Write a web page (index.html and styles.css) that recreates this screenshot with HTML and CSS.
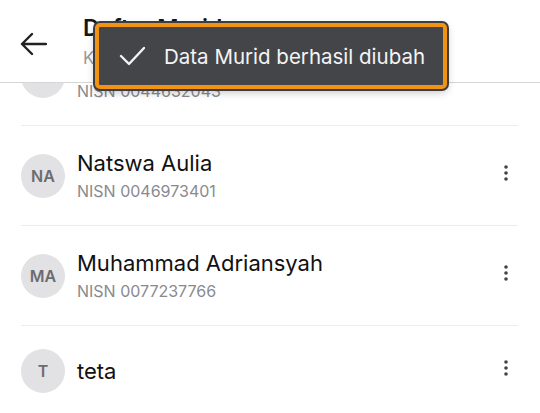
FILE: index.html
```html
<!DOCTYPE html>
<html lang="id">
<head>
    <meta charset="UTF-8">
    <meta name="viewport" content="width=device-width, initial-scale=1.0">
    <title>Daftar Murid</title>
    <link rel="stylesheet" href="styles.css">
</head>
<body>

<div class="app">
    <header class="topbar">
        <button class="back" aria-label="Kembali">
            <svg width="28" height="24" viewBox="0 0 28 24">
                <path d="M27 12H3M13 2L3 12l10 10" fill="none" stroke="#222" stroke-width="2.4" stroke-linecap="round" stroke-linejoin="round"/>
            </svg>
        </button>
        <div class="titles">
            <h1>Daftar Murid</h1>
            <p>Kelas 7A</p>
        </div>
    </header>

    <div class="scroll">
        <ul class="list">
            <li class="row">
                <span class="avatar">R</span>
                <div class="info">
                    <span class="name">Rizky Ramadhan</span>
                    <span class="nisn">NISN 0044632043</span>
                </div>
                <span class="more"></span>
            </li>
            <li class="row">
                <span class="avatar">NA</span>
                <div class="info">
                    <span class="name">Natswa Aulia</span>
                    <span class="nisn">NISN 0046973401</span>
                </div>
                <svg class="more" width="24" height="24" viewBox="0 0 24 24"><circle cx="12" cy="6" r="1.8"/><circle cx="12" cy="12" r="1.8"/><circle cx="12" cy="18" r="1.8"/></svg>
            </li>
            <li class="row">
                <span class="avatar">MA</span>
                <div class="info">
                    <span class="name">Muhammad Adriansyah</span>
                    <span class="nisn">NISN 0077237766</span>
                </div>
                <svg class="more" width="24" height="24" viewBox="0 0 24 24"><circle cx="12" cy="6" r="1.8"/><circle cx="12" cy="12" r="1.8"/><circle cx="12" cy="18" r="1.8"/></svg>
            </li>
            <li class="row">
                <span class="avatar">T</span>
                <div class="info">
                    <span class="name">teta</span>
                </div>
                <svg class="more" width="24" height="24" viewBox="0 0 24 24"><circle cx="12" cy="6" r="1.8"/><circle cx="12" cy="12" r="1.8"/><circle cx="12" cy="18" r="1.8"/></svg>
            </li>
        </ul>
    </div>

    <div class="toast" role="status">
        <svg width="26" height="20" viewBox="0 0 26 20">
            <path d="M2 10l8 8L25 2" fill="none" stroke="#f4f4f4" stroke-width="2.4" stroke-linecap="round" stroke-linejoin="round"/>
        </svg>
        <span>Data Murid berhasil diubah</span>
    </div>
</div>

</body>
</html>
```

FILE: styles.css
```css
* {
    box-sizing: border-box;
}
body {
    margin: 0;
    font-family: Inter, "Noto Sans", Arial, sans-serif;
    background: #fff;
    color: #161616;
}
.app {
    position: relative;
    width: 540px;
    height: 413px;
    overflow: hidden;
    display: flex;
    flex-direction: column;
}
.topbar {
    height: 83px;
    flex-shrink: 0;
    display: flex;
    align-items: center;
    padding-left: 19px;
    border-bottom: 1px solid #d6d6d6;
    background: #fff;
    position: relative;
    z-index: 1;
}
.back {
    background: none;
    border: none;
    padding: 0;
    width: 28px;
    height: 24px;
    display: flex;
    margin-right: 36px;
    margin-top: 5px;
}
.titles h1 {
    margin: 0;
    font-size: 23px;
    font-weight: 600;
    line-height: 28px;
}
.titles p {
    margin: 6px 0 0;
    font-size: 17px;
    color: #999;
    line-height: 20px;
}
.scroll {
    flex: 1;
    overflow: hidden;
}
.list {
    list-style: none;
    margin: -57px 22px 0 21px;
    padding: 0;
}
.row {
    display: flex;
    align-items: center;
    padding: 23px 0;
    border-bottom: 1px solid #ececec;
}
.avatar {
    width: 44px;
    height: 44px;
    border-radius: 50%;
    background: #e2e2e4;
    color: #6c6c70;
    font-size: 16px;
    font-weight: 600;
    display: flex;
    align-items: center;
    justify-content: center;
    flex-shrink: 0;
}
.info {
    flex: 1;
    display: flex;
    flex-direction: column;
    margin-left: 12px;
}
.name {
    font-size: 22px;
    line-height: 28px;
    color: #111;
}
.nisn {
    font-size: 16px;
    line-height: 22px;
    margin-top: 3px;
    color: #8a8a8e;
}
.more {
    width: 24px;
    height: 24px;
    fill: #444;
    margin-bottom: 6px;
}
.toast {
    position: absolute;
    left: 95px;
    top: 23px;
    width: 352px;
    height: 66px;
    display: flex;
    align-items: center;
    gap: 19px;
    padding-left: 20px;
    background: #444549;
    border: 4px solid #f39314;
    border-radius: 5px;
    box-shadow: 0 0 0 2px #3c3d41, 0 3px 8px rgba(0, 0, 0, 0.25);
    color: #f4f4f4;
    font-size: 20.5px;
    z-index: 2;
}
```
